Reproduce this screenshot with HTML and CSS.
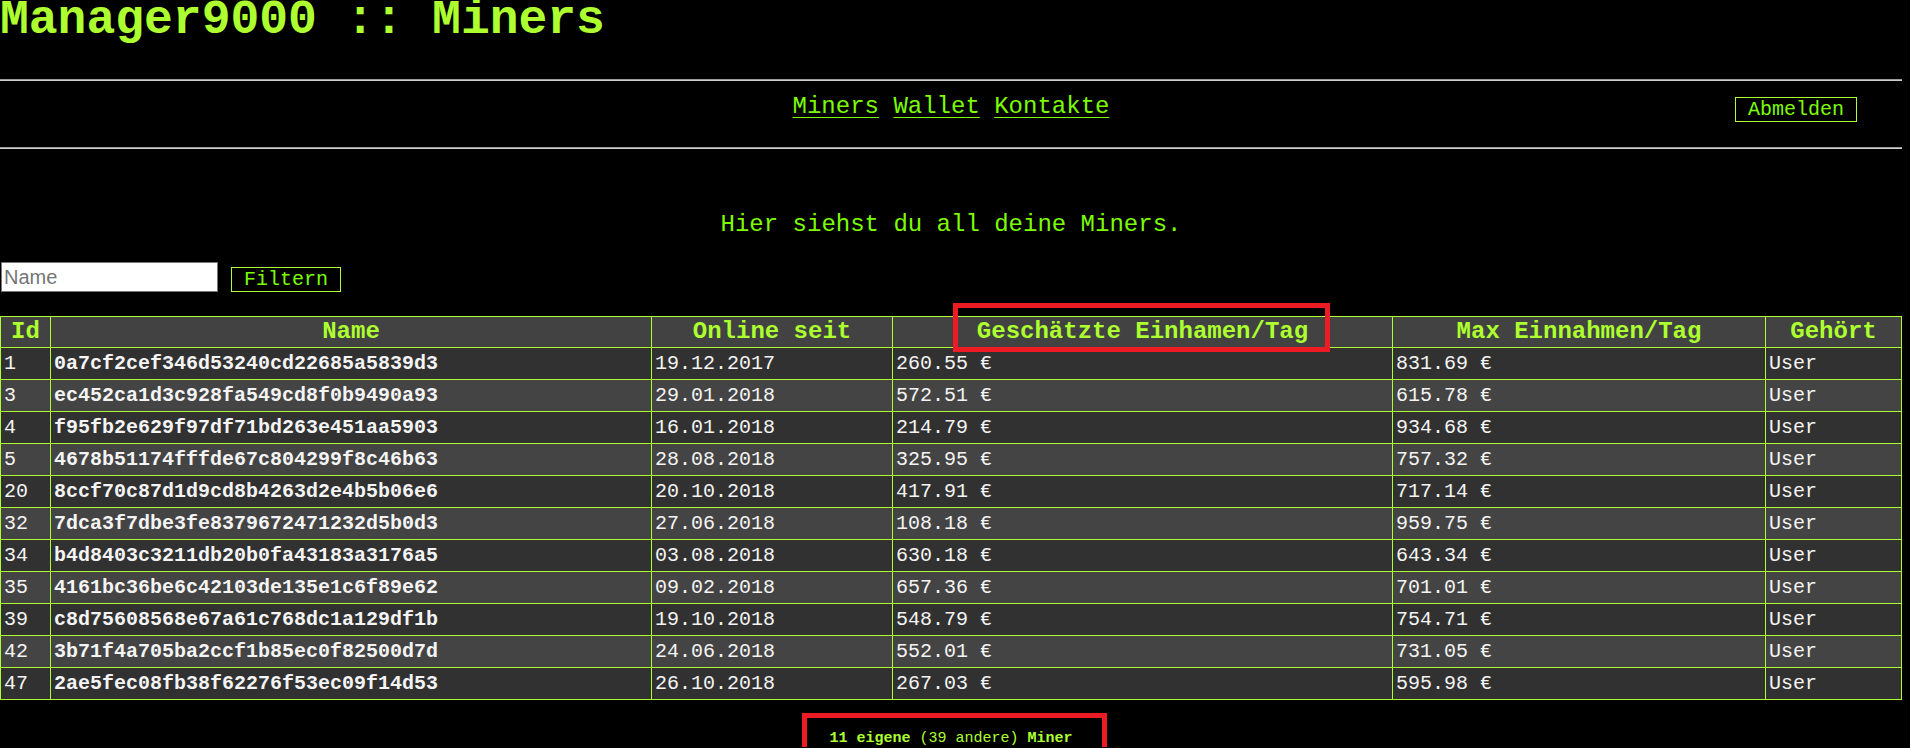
FILE: index.html
```html
<!DOCTYPE html>
<html lang="de">
<head>
<meta charset="utf-8">
<title>Manager9000 :: Miners</title>
<link rel="stylesheet" href="styles.css">
</head>
<body>
<div class="page">
  <h1 class="title">Manager9000 :: Miners</h1>
  <hr class="rule">
  <nav class="nav">
    <div class="nav-links">
      <a href="#" class="nav-link">Miners</a> <a href="#" class="nav-link">Wallet</a> <a href="#" class="nav-link">Kontakte</a>
    </div>
    <div class="nav-side">
      <button class="btn">Abmelden</button>
    </div>
  </nav>
  <hr class="rule">
  <p class="intro">Hier siehst du all deine Miners.</p>
  <form class="filter">
    <input class="filter-input" type="text" placeholder="Name">
    <button class="btn" type="button">Filtern</button>
  </form>
  <table class="miners">
    <colgroup>
      <col class="c-id"><col class="c-name"><col class="c-date"><col class="c-est"><col class="c-max"><col class="c-own">
    </colgroup>
    <thead>
      <tr><th>Id</th><th>Name</th><th>Online seit</th><th>Geschätzte Einhamen/Tag</th><th>Max Einnahmen/Tag</th><th>Gehört</th></tr>
    </thead>
    <tbody>
      <tr><td>1</td><td class="name">0a7cf2cef346d53240cd22685a5839d3</td><td>19.12.2017</td><td>260.55 €</td><td>831.69 €</td><td>User</td></tr>
      <tr><td>3</td><td class="name">ec452ca1d3c928fa549cd8f0b9490a93</td><td>29.01.2018</td><td>572.51 €</td><td>615.78 €</td><td>User</td></tr>
      <tr><td>4</td><td class="name">f95fb2e629f97df71bd263e451aa5903</td><td>16.01.2018</td><td>214.79 €</td><td>934.68 €</td><td>User</td></tr>
      <tr><td>5</td><td class="name">4678b51174fffde67c804299f8c46b63</td><td>28.08.2018</td><td>325.95 €</td><td>757.32 €</td><td>User</td></tr>
      <tr><td>20</td><td class="name">8ccf70c87d1d9cd8b4263d2e4b5b06e6</td><td>20.10.2018</td><td>417.91 €</td><td>717.14 €</td><td>User</td></tr>
      <tr><td>32</td><td class="name">7dca3f7dbe3fe8379672471232d5b0d3</td><td>27.06.2018</td><td>108.18 €</td><td>959.75 €</td><td>User</td></tr>
      <tr><td>34</td><td class="name">b4d8403c3211db20b0fa43183a3176a5</td><td>03.08.2018</td><td>630.18 €</td><td>643.34 €</td><td>User</td></tr>
      <tr><td>35</td><td class="name">4161bc36be6c42103de135e1c6f89e62</td><td>09.02.2018</td><td>657.36 €</td><td>701.01 €</td><td>User</td></tr>
      <tr><td>39</td><td class="name">c8d75608568e67a61c768dc1a129df1b</td><td>19.10.2018</td><td>548.79 €</td><td>754.71 €</td><td>User</td></tr>
      <tr><td>42</td><td class="name">3b71f4a705ba2ccf1b85ec0f82500d7d</td><td>24.06.2018</td><td>552.01 €</td><td>731.05 €</td><td>User</td></tr>
      <tr><td>47</td><td class="name">2ae5fec08fb38f62276f53ec09f14d53</td><td>26.10.2018</td><td>267.03 €</td><td>595.98 €</td><td>User</td></tr>
    </tbody>
  </table>
  <p class="summary"><b>11 eigene</b> (39 andere) <b>Miner</b></p>
  <div class="mark mark-head"></div>
  <div class="mark mark-foot"></div>
</div>
</body>
</html>
```

FILE: styles.css
```css
html, body {
  margin: 0;
  padding: 0;
  background: #000;
}

.page {
  position: relative;
  width: 1902px;
  font-family: "Liberation Mono", "Courier New", monospace;
  color: #7cfc00;
}

.title {
  margin: 0;
  font-size: 48px;
  line-height: 40px;
  font-weight: bold;
  color: #adff2f;
}

.rule {
  margin: 0;
  height: 0;
  border: 0;
  border-top: 1px solid #9c9c9c;
  border-bottom: 1px solid #cfcfcf;
}

.title + .rule {
  margin-top: 39px;
}

.nav {
  display: grid;
  grid-template-columns: 1fr auto 1fr;
  align-items: start;
  padding: 12px 0 25px;
}

.nav-links {
  grid-column: 2;
  font-size: 24px;
  line-height: 27px;
}

.nav-link {
  color: #7cfc00;
  text-decoration: underline;
  text-underline-offset: 4px;
  text-decoration-thickness: 1px;
}

.nav-side {
  grid-column: 3;
  display: flex;
  justify-content: flex-end;
  align-items: flex-start;
  padding-top: 4px;
  padding-right: 45px;
}

.btn {
  font-family: "Liberation Mono", "Courier New", monospace;
  font-size: 20px;
  line-height: 23px;
  color: #7cfc00;
  background: #000;
  border: 1px solid #adff2f;
  padding: 0 12px;
  margin: 0;
  cursor: pointer;
}

.intro {
  margin: 62px 0 0;
  text-align: center;
  font-size: 24px;
  line-height: 27px;
}

.filter {
  display: flex;
  align-items: flex-end;
  gap: 13px;
  margin: 24px 0 0 1px;
}

.filter-input {
  box-sizing: border-box;
  width: 217px;
  height: 30px;
  margin: 0;
  padding: 0 2px;
  border: 1px solid #767676;
  background: #fff;
  font-family: "Liberation Sans", Arial, sans-serif;
  font-size: 20px;
}

.filter-input::placeholder {
  color: #757575;
}

.miners {
  margin-top: 24px;
  width: 1901px;
  table-layout: fixed;
  border-collapse: collapse;
  font-size: 20px;
  color: #f4f4f4;
}

.c-id { width: 50px; }
.c-name { width: 601px; }
.c-date { width: 241px; }
.c-est { width: 500px; }
.c-max { width: 373px; }
.c-own { width: 136px; }

.miners th,
.miners td {
  border: 1px solid #adff2f;
  white-space: nowrap;
  overflow: hidden;
}

.miners th {
  background: #424242;
  color: #adff2f;
  font-size: 24px;
  line-height: 26px;
  font-weight: bold;
  padding: 2px 3px;
  text-align: center;
}

.miners td {
  line-height: 23px;
  padding: 4px 3px;
  text-align: left;
}

.miners tbody tr:nth-child(odd) {
  background: #313131;
}

.miners tbody tr:nth-child(even) {
  background: #444444;
}

.miners td.name {
  font-weight: bold;
}

.summary {
  margin: 30px 0 0;
  text-align: center;
  font-size: 15px;
  line-height: 17px;
  color: #adff2f;
}

.summary b {
  font-weight: bold;
}

.mark {
  position: absolute;
  border: 5px solid #ed1c24;
  box-sizing: border-box;
  pointer-events: none;
}

.mark-head {
  left: 953px;
  top: 303px;
  width: 377px;
  height: 49px;
}

.mark-foot {
  left: 802px;
  top: 713px;
  width: 305px;
  height: 42px;
}
```
